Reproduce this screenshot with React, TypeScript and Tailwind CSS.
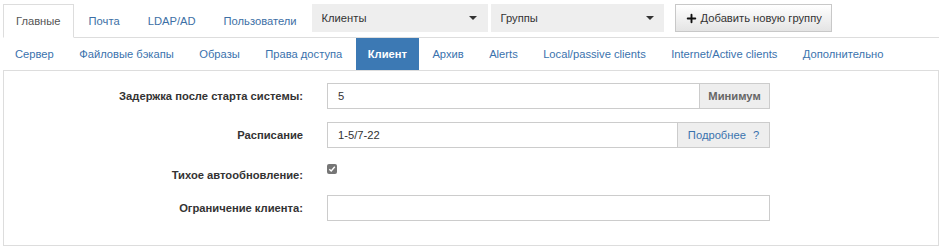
import { Plus } from 'lucide-react';

const topTabs = ['Главные', 'Почта', 'LDAP/AD', 'Пользователи'];
const subTabs = [
  'Сервер',
  'Файловые бэкапы',
  'Образы',
  'Права доступа',
  'Клиент',
  'Архив',
  'Alerts',
  'Local/passive clients',
  'Internet/Active clients',
  'Дополнительно',
];

function Caret() {
  return <span className="w-0 h-0 border-l-[4px] border-r-[4px] border-t-[4px] border-l-transparent border-r-transparent border-t-[#333]" />;
}

function Row({ label, children }: { label: string; children: React.ReactNode }) {
  return (
    <div className="flex items-center">
      <label className="w-[299px] text-right font-bold text-[#333]">{label}</label>
      <div className="ml-[24px] w-[443px]">{children}</div>
    </div>
  );
}

export default function App() {
  return (
    <div className="w-[942px] h-[251px] bg-white px-[3px] font-['Liberation_Sans',Arial,sans-serif] text-[11.2px] leading-[14px]">
      {/* Main tabs + group selectors */}
      <div className="flex items-start border-b border-[#ddd] pt-[4px]">
        {topTabs.map((t, i) => (
          <div
            key={t}
            className={
              i === 0
                ? 'h-[34px] -mb-px mr-[2px] px-[12px] flex items-center border border-[#ddd] border-b-white bg-white text-[#555]'
                : 'h-[34px] -mb-px mr-[2px] px-[12px] flex items-center border border-transparent text-[#3d6fa5]'
            }
          >
            {t}
          </div>
        ))}
        <div className="w-[176px] h-[28px] bg-[#eeeeee] flex items-center justify-between pl-[10px] pr-[11px] text-[#333]">
          <span>Клиенты</span>
          <Caret />
        </div>
        <div className="ml-[3px] w-[173px] h-[28px] bg-[#eeeeee] flex items-center justify-between pl-[10px] pr-[10px] text-[#333]">
          <span>Группы</span>
          <Caret />
        </div>
        <button className="ml-[11px] w-[157px] h-[28px] border border-[#c8c8c8] bg-gradient-to-b from-white to-[#e4e4e4] flex items-center pl-[9px] gap-[3px] text-[#333]">
          <Plus size={13} strokeWidth={3.5} className="text-[#111]" />
          <span>Добавить новую группу</span>
        </button>
      </div>

      {/* Sub tabs */}
      <div className="flex h-[32px]">
        {subTabs.map((t) => (
          <div
            key={t}
            className={
              t === 'Клиент'
                ? 'h-[32px] mr-[1.4px] px-[12px] flex items-center bg-[#3c79b4] text-white font-bold'
                : 'h-[32px] mr-[1.4px] px-[12px] flex items-center text-[#3a72ad]'
            }
          >
            {t}
          </div>
        ))}
      </div>

      {/* Settings panel */}
      <div className="border border-[#ddd] pt-[12px] pb-[24px] flex flex-col gap-[13px]">
        <Row label="Задержка после старта системы:">
          <div className="flex h-[26px]">
            <div className="flex-1 border border-[#ccc] flex items-center pl-[10px] text-[#333]">5</div>
            <div className="w-[70px] border border-l-0 border-[#ccc] bg-[#eeeeee] flex items-center justify-center font-bold text-[#666]">
              Минимум
            </div>
          </div>
        </Row>
        <Row label="Расписание">
          <div className="flex h-[26px]">
            <div className="flex-1 border border-[#ccc] flex items-center pl-[10px] text-[#333]">1-5/7-22</div>
            <div className="w-[92px] border border-l-0 border-[#ccc] bg-[#eeeeee] flex items-center justify-center gap-[7px] text-[#3a72ad]">
              <span>Подробнее</span>
              <span>?</span>
            </div>
          </div>
        </Row>
        <div className="flex items-start h-[21px]">
          <label className="w-[299px] pt-[7px] text-right font-bold text-[#333]">Тихое автообновление:</label>
          <div className="ml-[24px] pt-[3px]">
            <span className="w-[10px] h-[10px] rounded-[2px] bg-[#767676] flex items-center justify-center">
              <svg width="8" height="8" viewBox="0 0 8 8">
                <path d="M1.3 4.2 L3.2 6 L6.8 1.8" fill="none" stroke="white" strokeWidth="1.4" />
              </svg>
            </span>
          </div>
        </div>
        <Row label="Ограничение клиента:">
          <div className="h-[26px] border border-[#ccc]" />
        </Row>
      </div>
    </div>
  );
}
